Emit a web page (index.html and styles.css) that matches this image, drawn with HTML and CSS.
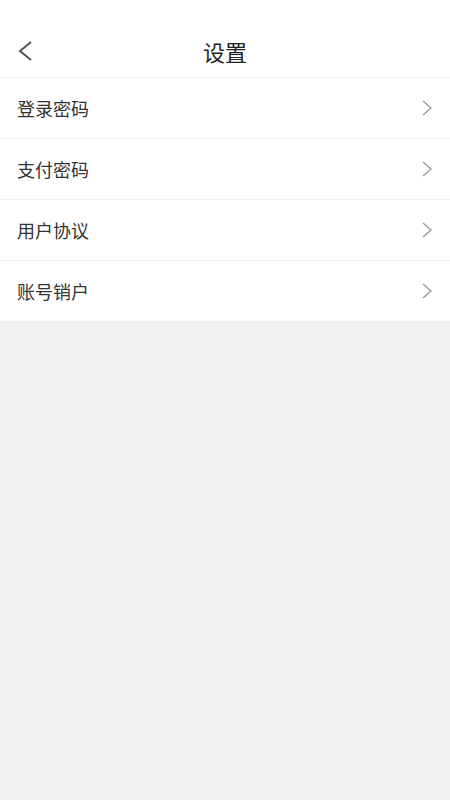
FILE: index.html
```html
<!DOCTYPE html>
<html lang="zh-CN">

<head>
    <meta charset="UTF-8">
    <meta name="viewport" content="width=device-width, initial-scale=1.0">
    <title>设置</title>
    <link rel="stylesheet" href="styles.css">
</head>

<body>
    <header class="header">
        <span class="back">
            <svg width="16" height="22" viewBox="0 0 16 22">
                <path d="M14 2 L3 11 L14 20" fill="none" stroke="#555" stroke-width="2" />
            </svg>
        </span>
        <h1>设置</h1>
    </header>

    <ul class="menu">
        <li class="menu-item">
            <span>登录密码</span>
            <svg class="arrow" width="10" height="16" viewBox="0 0 10 16">
                <path d="M1 1 L9 8 L1 15" fill="none" stroke="#9a9a9a" stroke-width="1.4" />
            </svg>
        </li>
        <li class="menu-item">
            <span>支付密码</span>
            <svg class="arrow" width="10" height="16" viewBox="0 0 10 16">
                <path d="M1 1 L9 8 L1 15" fill="none" stroke="#9a9a9a" stroke-width="1.4" />
            </svg>
        </li>
        <li class="menu-item">
            <span>用户协议</span>
            <svg class="arrow" width="10" height="16" viewBox="0 0 10 16">
                <path d="M1 1 L9 8 L1 15" fill="none" stroke="#9a9a9a" stroke-width="1.4" />
            </svg>
        </li>
        <li class="menu-item">
            <span>账号销户</span>
            <svg class="arrow" width="10" height="16" viewBox="0 0 10 16">
                <path d="M1 1 L9 8 L1 15" fill="none" stroke="#9a9a9a" stroke-width="1.4" />
            </svg>
        </li>
    </ul>
</body>

</html>
```

FILE: styles.css
```css
body {
    font-family: 'Noto Sans CJK SC', 'Noto Sans', sans-serif;
    background-color: #f1f1f1;
    margin: 0;
    padding: 0;
    min-height: 100vh;
    color: #333;
}

.header {
    height: 52px;
    padding-top: 25px;
    background-color: #fff;
    border-bottom: 1px solid #efefef;
    display: flex;
    align-items: center;
    justify-content: center;
    position: relative;
}

.header h1 {
    margin: 0;
    font-size: 22px;
    font-weight: 400;
    color: #222;
}

.back {
    position: absolute;
    left: 17px;
    top: 40px;
    display: flex;
}

.menu {
    list-style: none;
    margin: 0;
    padding: 0;
    background-color: #fff;
}

.menu-item {
    height: 60px;
    padding: 0 17px 0 17px;
    border-bottom: 1px solid #efefef;
    display: flex;
    align-items: center;
    justify-content: space-between;
    font-size: 18px;
    color: #333;
}

.arrow {
    margin-right: 1px;
}
```
